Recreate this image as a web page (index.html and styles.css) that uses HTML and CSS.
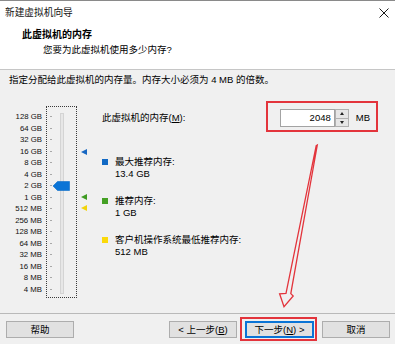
FILE: index.html
```html
<!DOCTYPE html>
<html lang="zh-CN">
<head>
<meta charset="utf-8">
<title>新建虚拟机向导</title>
<link rel="stylesheet" href="styles.css">
</head>
<body>
<div class="window">
  <div class="top">
    <div class="titlebar">
      <span class="title">新建虚拟机向导</span>
      <svg class="close" width="10" height="10" viewBox="0 0 10 10"><path d="M0.5 0.5 L9.5 9.5 M9.5 0.5 L0.5 9.5" stroke="#1a1a1a" stroke-width="1" fill="none"/></svg>
    </div>
    <div class="header">
      <div class="h-title">此虚拟机的内存</div>
      <div class="h-sub">您要为此虚拟机使用多少内存?</div>
    </div>
  </div>

  <div class="content">
    <p class="intro">指定分配给此虚拟机的内存量。内存大小必须为 4 MB 的倍数。</p>
    <div class="main">
      <div class="scale">
        <span>128 GB</span><span>64 GB</span><span>32 GB</span><span>16 GB</span>
        <span>8 GB</span><span>4 GB</span><span>2 GB</span><span>1 GB</span>
        <span>512 MB</span><span>256 MB</span><span>128 MB</span><span>64 MB</span>
        <span>32 MB</span><span>16 MB</span><span>8 MB</span><span>4 MB</span>
      </div>
      <div class="slider">
        <div class="ticks">
          <i></i><i></i><i></i><i></i><i></i><i></i><i></i><i></i>
          <i></i><i></i><i></i><i></i><i></i><i></i><i></i><i></i>
        </div>
        <div class="track"></div>
        <svg class="thumb" style="top:73.75px" width="17" height="10" viewBox="0 0 17 10"><polygon points="0,5 4.5,0.5 16.5,0.5 16.5,9.5 4.5,9.5" fill="#0a74d6" stroke="#0a6cc8" stroke-width="0.6"/></svg>
      </div>
      <div class="markers">
        <span class="mk mk-blue" style="top:42.8px"></span>
        <span class="mk mk-green" style="top:87.5px"></span>
        <span class="mk mk-yellow" style="top:98.5px"></span>
      </div>
      <div class="right">
        <div class="mem-row">
          <span class="mem-label">此虚拟机的内存(<u>M</u>):</span>
          <div class="spin-group callout">
            <div class="input">2048</div>
            <div class="spin">
              <span class="spin-btn"><i class="up"></i></span>
              <span class="spin-btn"><i class="down"></i></span>
            </div>
            <span class="unit">MB</span>
          </div>
        </div>
        <div class="legend">
          <div class="item">
            <span class="sq sq-blue"></span>
            <div class="lines"><span>最大推荐内存:</span><span>13.4 GB</span></div>
          </div>
          <div class="item">
            <span class="sq sq-green"></span>
            <div class="lines"><span>推荐内存:</span><span>1 GB</span></div>
          </div>
          <div class="item">
            <span class="sq sq-yellow"></span>
            <div class="lines"><span>客户机操作系统最低推荐内存:</span><span>512 MB</span></div>
          </div>
        </div>
      </div>
    </div>
  </div>

  <div class="footer">
    <button class="btn">帮助</button>
    <button class="btn btn-back">&lt; 上一步(<u>B</u>)</button>
    <button class="btn btn-default callout-btn">下一步(<u>N</u>) &gt;</button>
    <button class="btn">取消</button>
  </div>

  <svg class="arrow" width="395" height="344" viewBox="0 0 395 344">
    <polygon points="317.3,145 290.8,293.6 293.2,296 284,306.6 279.6,293.8 286,293.3 316.2,145.6" fill="none" stroke="#e3343c" stroke-width="1.3" stroke-linejoin="miter"/>
  </svg>
</div>
</body>
</html>
```

FILE: styles.css
```css
* {
  box-sizing: border-box;
  margin: 0;
  padding: 0;
}

html, body {
  background: #f0f0f0;
}

body {
  margin: 0;
  font-family: "Liberation Sans", "Noto Sans CJK SC", sans-serif;
  font-size: 9.5px;
  color: #000;
}

.window {
  position: relative;
  width: 395px;
  height: 344px;
  background: #f0f0f0;
  border-top: 1px solid #8a8a8a;
  display: flex;
  flex-direction: column;
  overflow: hidden;
}

/* top white area */
.top {
  flex: none;
  height: 69px;
  background: #fff;
  border-bottom: 1px solid #c6c6c6;
}

.titlebar {
  height: 24px;
  display: flex;
  align-items: center;
  justify-content: space-between;
  padding: 0 6px 0 5px;
}

.title {
  font-size: 9.7px;
  line-height: 12px;
  color: #111;
}

.close {
  display: block;
}

.header {
  padding: 3px 0 0 22px;
}

.h-title {
  font-weight: 700;
  font-size: 10px;
  line-height: 14px;
}

.h-sub {
  margin-top: 1px;
  padding-left: 21px;
  line-height: 14px;
}

/* content */
.content {
  flex: 1;
  display: flex;
  flex-direction: column;
}

.intro {
  margin-top: 4px;
  padding-left: 9px;
  line-height: 12px;
}

.main {
  margin-top: 20px;
  display: flex;
  align-items: flex-start;
}

.scale {
  width: 42px;
  padding-top: 5px;
  display: flex;
  flex-direction: column;
  align-items: flex-end;
  font-size: 7.8px;
  line-height: 11.5px;
  color: #111;
}

.slider {
  position: relative;
  margin-left: 4px;
  width: 31px;
  height: 192px;
  border: 1px dotted #3a3a3a;
  display: flex;
  align-items: flex-start;
  padding-left: 3px;
}

.ticks {
  padding-top: 4px;
  display: flex;
  flex-direction: column;
}

.ticks i {
  height: 11.5px;
  width: 2px;
  display: flex;
  align-items: center;
}

.ticks i::before {
  content: "";
  width: 2px;
  height: 1px;
  background: #a8a8a8;
}

.track {
  margin-left: 8px;
  margin-top: 6px;
  width: 4px;
  height: 181px;
  background: #e7e7e7;
  border: 1px solid #d4d4d4;
}

.thumb {
  position: absolute;
  left: 5.5px;
  display: block;
}

.markers {
  position: relative;
  width: 25px;
  height: 192px;
}

.mk {
  position: absolute;
  left: 4px;
  width: 0;
  height: 0;
  border-top: 3.5px solid transparent;
  border-bottom: 3.5px solid transparent;
  border-right: 6.5px solid #1767c2;
}

.mk-green {
  border-right-color: #3f9b23;
}

.mk-yellow {
  border-right-color: #f2d40c;
}

.right {
  flex: 1;
  padding-right: 25px;
  display: flex;
  flex-direction: column;
}

.mem-row {
  height: 24px;
  display: flex;
  align-items: center;
}

.mem-label {
  line-height: 12px;
}

.spin-group {
  margin-left: auto;
  display: flex;
  align-items: center;
  height: 18px;
}

.callout {
  position: relative;
}

.callout::after {
  content: "";
  position: absolute;
  top: -8px;
  right: -8px;
  bottom: -5px;
  left: -14px;
  border: 2px solid #e3343c;
  pointer-events: none;
}

.input {
  width: 55px;
  height: 18px;
  background: #fff;
  border: 1px solid #a3a3a3;
  text-align: right;
  padding-right: 3px;
  line-height: 16px;
}

.spin {
  width: 14px;
  height: 18px;
  display: flex;
  flex-direction: column;
}

.spin-btn {
  flex: 1;
  display: flex;
  align-items: center;
  justify-content: center;
  background: #e6e6e6;
  border: 1px solid #b0b0b0;
}

.spin-btn + .spin-btn {
  border-top: none;
}

.spin-btn i {
  width: 0;
  height: 0;
  border-left: 2.5px solid transparent;
  border-right: 2.5px solid transparent;
}

.spin-btn i.up {
  border-bottom: 3px solid #222;
}

.spin-btn i.down {
  border-top: 3px solid #222;
}

.unit {
  margin-left: 7px;
  line-height: 12px;
}

.legend {
  margin-top: 26px;
  display: flex;
  flex-direction: column;
  gap: 15px;
}

.item {
  display: flex;
  gap: 7px;
}

.sq {
  flex: none;
  width: 6px;
  height: 6px;
  margin-top: 3px;
}

.sq-blue {
  background: #1169c4;
}

.sq-green {
  background: #44a024;
}

.sq-yellow {
  background: #fbd90a;
}

.lines {
  display: flex;
  flex-direction: column;
  line-height: 12px;
}

/* footer */
.footer {
  flex: none;
  height: 31px;
  border-top: 1px solid #b9b9b9;
  display: flex;
  align-items: flex-start;
  gap: 8px;
  padding: 7px 5px 0 6px;
}

.btn {
  width: 68px;
  height: 17px;
  background: #e1e1e1;
  border: 1px solid #adadad;
  font-family: inherit;
  font-size: 9.5px;
  line-height: 13px;
  color: #000;
  text-align: center;
}

.btn-back {
  margin-left: auto;
}

.btn-default {
  width: 69px;
  border: 2px solid #0a74d6;
  line-height: 11px;
}

.callout-btn {
  position: relative;
}

.callout-btn::after {
  content: "";
  position: absolute;
  top: -6px;
  right: -5px;
  bottom: -5px;
  left: -7px;
  border: 2px solid #e3343c;
  pointer-events: none;
}

.arrow {
  position: absolute;
  left: 0;
  top: -1px;
  pointer-events: none;
}
```
